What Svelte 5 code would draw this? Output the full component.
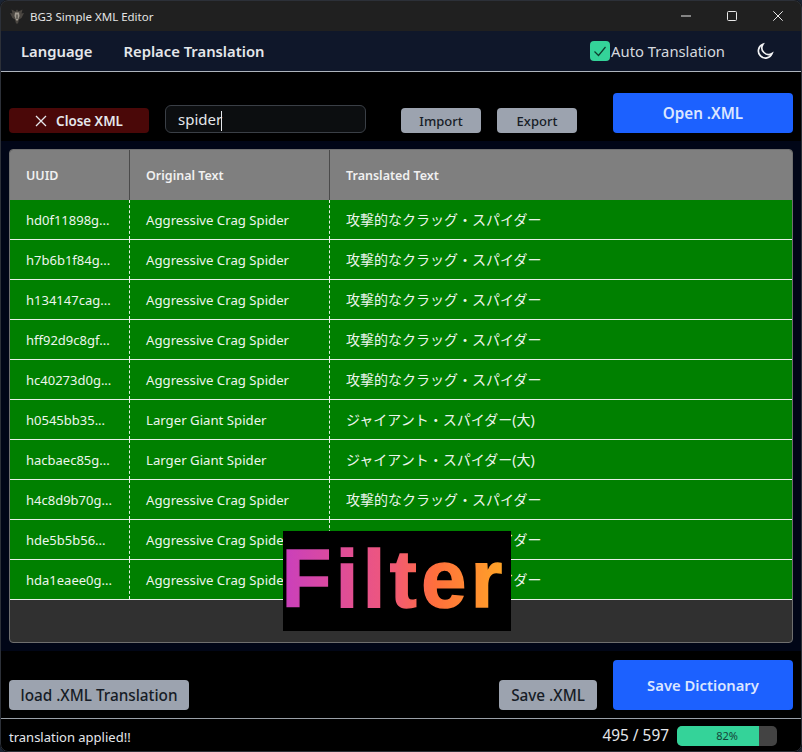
<script lang="ts">
  const crag = 'Aggressive Crag Spider';
  const cragJa = '攻撃的なクラッグ・スパイダー';
  const giant = 'Larger Giant Spider';
  const giantJa = 'ジャイアント・スパイダー(大)';

  const rows = [
    { uuid: 'hd0f11898g...', original: crag, translated: cragJa },
    { uuid: 'h7b6b1f84g...', original: crag, translated: cragJa },
    { uuid: 'h134147cag...', original: crag, translated: cragJa },
    { uuid: 'hff92d9c8gf...', original: crag, translated: cragJa },
    { uuid: 'hc40273d0g...', original: crag, translated: cragJa },
    { uuid: 'h0545bb35...', original: giant, translated: giantJa },
    { uuid: 'hacbaec85g...', original: giant, translated: giantJa },
    { uuid: 'h4c8d9b70g...', original: crag, translated: cragJa },
    { uuid: 'hde5b5b56...', original: crag, translated: cragJa },
    { uuid: 'hda1eaee0g...', original: crag, translated: cragJa }
  ];

  let search = $state('spider');
  let autoTranslate = $state(true);
  const done = 495;
  const total = 597;
  const percent = 82;
</script>

<div class="window">
  <!-- Title bar -->
  <header class="titlebar">
    <svg class="app-icon" viewBox="0 0 16 16" aria-hidden="true">
      <path d="M8 1.500 9.500 3.500 13.500 1.500 12.500 5.500 15 5 12.500 10 10 11.500 9 15.500H7L6 11.500 3.500 10 1 5 3.500 5.500 2.500 1.500 6.500 3.500Z" fill="#4a4641" />
      <path d="M6 4.500h4L10.500 8 8.800 12.500H7.200L5.500 8Z" fill="#a09a90" />
      <path d="M7.500 6.500h1V11h-1Z" fill="#34322e" />
    </svg>
    <span class="app-title">BG3 Simple XML Editor</span>
    <div class="window-controls">
      <svg viewBox="0 0 10 10" aria-hidden="true"><path d="M0 5h10" /></svg>
      <svg viewBox="0 0 10 10" aria-hidden="true"><rect x="0.5" y="0.5" width="9" height="9" rx="1" /></svg>
      <svg viewBox="0 0 10 10" aria-hidden="true"><path d="M0.300 0.300 9.700 9.700M9.700 0.300 0.300 9.700" /></svg>
    </div>
  </header>

  <!-- Menu bar -->
  <nav class="menubar">
    <span class="menu-item">Language</span>
    <span class="menu-item">Replace Translation</span>
    <label class="auto-translate">
      <input type="checkbox" bind:checked={autoTranslate} />
      <span class="checkmark">
        <svg viewBox="0 0 20 20" aria-hidden="true"><path d="M4.500 10.500 8.500 14.500 15.500 6" /></svg>
      </span>
      Auto Translation
    </label>
    <svg class="moon" viewBox="0 0 24 24" aria-hidden="true">
      <path d="M9.500 4A8.500 8.500 0 1 0 20.500 15 8 8 0 0 1 9.500 4Z" />
    </svg>
  </nav>

  <main class="content">
    <!-- Toolbar -->
    <div class="toolbar">
      <button class="btn btn-close">
        <svg viewBox="0 0 12 12" aria-hidden="true"><path d="M1 1 11 11M11 1 1 11" /></svg>
        Close XML
      </button>
      <input class="search" type="text" bind:value={search} />
      <span class="caret"></span>
      <button class="btn btn-muted btn-small first-small">Import</button>
      <button class="btn btn-muted btn-small">Export</button>
      <button class="btn btn-primary btn-open">Open .XML</button>
    </div>

    <!-- Translation table -->
    <div class="table-area">
      <section class="table-wrap">
        <div class="row head">
          <div class="cell">UUID</div>
          <div class="cell">Original Text</div>
          <div class="cell">Translated Text</div>
        </div>
        {#each rows as row}
          <div class="row body">
            <div class="cell">{row.uuid}</div>
            <div class="cell original">{row.original}</div>
            <div class="cell translated">{row.translated}</div>
          </div>
        {/each}
      </section>
    </div>

    <!-- Bottom actions -->
    <div class="actions">
      <button class="btn btn-muted btn-load">load .XML Translation</button>
      <button class="btn btn-muted btn-save">Save .XML</button>
      <button class="btn btn-primary btn-dict">Save Dictionary</button>
    </div>
  </main>

  <!-- Status bar -->
  <footer class="statusbar">
    <span class="status">translation applied!!</span>
    <span class="count">{done} / {total}</span>
    <div class="progress">
      <div class="progress-fill" style="width: {percent}%"></div>
      <span class="progress-label">{percent}%</span>
    </div>
  </footer>

  <!-- Video caption over the table -->
  <div class="caption"><span>Filter</span></div>
</div>

<style>
  :global(body) {
    margin: 0;
    background: #1b2433;
  }

  .window {
    position: relative;
    width: 802px;
    height: 752px;
    display: flex;
    flex-direction: column;
    overflow: hidden;
    box-sizing: border-box;
    border-radius: 8px;
    background: #000;
    color: #e5e7eb;
    font-family: 'Noto Sans', 'Noto Sans CJK JP', sans-serif;
  }

  /* Thin window frame, drawn above the content */
  .window::after {
    content: '';
    position: absolute;
    inset: 0;
    border: 1px solid #2c3038;
    border-radius: 8px;
    pointer-events: none;
  }

  /* Title bar */
  .titlebar {
    height: 31px;
    flex: none;
    display: flex;
    align-items: center;
    padding-left: 9px;
    background: #202020;
  }

  .app-icon {
    width: 16px;
    height: 16px;
  }

  .app-title {
    margin-left: 5px;
    padding-top: 1px;
    font-size: 11.500px;
    color: #e4e4e4;
  }

  .window-controls {
    margin-left: auto;
    display: flex;
    align-items: center;
    gap: 36px;
    padding-right: 19px;
  }

  .window-controls svg {
    width: 10px;
    height: 10px;
    fill: none;
    stroke: #e8e8e8;
    stroke-width: 1;
  }

  /* Menu bar */
  .menubar {
    height: 41px;
    flex: none;
    box-sizing: border-box;
    display: flex;
    align-items: center;
    padding: 0 27px 0 21px;
    background: #0f172a;
    border-bottom: 1px solid #aeb4bd;
  }

  .menu-item {
    margin-right: 31px;
    font-size: 14.800px;
    font-weight: 600;
    color: #e5e7eb;
  }

  .auto-translate {
    margin-left: auto;
    display: flex;
    align-items: center;
    font-size: 14.800px;
    color: #d5d9df;
  }

  .auto-translate input {
    display: none;
  }

  .checkmark {
    width: 20px;
    height: 20px;
    margin-right: 1px;
    border-radius: 4px;
    background: #34d399;
  }

  .checkmark svg {
    display: block;
    fill: none;
    stroke: #0f3d2e;
    stroke-width: 1.200;
  }

  .moon {
    width: 20px;
    height: 20px;
    margin-left: 30px;
    fill: none;
    stroke: #f3f4f6;
    stroke-width: 2;
  }

  /* Content */
  .content {
    flex: 1;
    min-height: 0;
    display: flex;
    flex-direction: column;
    padding: 21px 0 8px;
  }

  .toolbar {
    position: relative;
    display: flex;
    align-items: flex-end;
    height: 40px;
    flex: none;
    padding: 0 9px;
  }

  .btn {
    border: none;
    border-radius: 4px;
    font-family: inherit;
    font-weight: 600;
    padding: 0;
  }

  .btn-close {
    width: 140px;
    height: 25px;
    display: flex;
    align-items: center;
    justify-content: center;
    gap: 9px;
    background: #4a0808;
    color: #e5e7eb;
    font-size: 13.400px;
  }

  .btn-close svg {
    width: 12px;
    height: 12px;
    fill: none;
    stroke: #e5e7eb;
    stroke-width: 1.300;
  }

  .search {
    box-sizing: border-box;
    width: 201px;
    height: 28px;
    margin-left: 16px;
    padding: 0 12px;
    border: 1px solid #3a3f46;
    border-radius: 6px;
    outline: none;
    background: #0c0e10;
    color: #e5e7eb;
    font-family: inherit;
    font-size: 15px;
  }

  .caret {
    position: absolute;
    left: 221px;
    top: 18px;
    width: 1px;
    height: 20px;
    background: #e5e7eb;
  }

  .btn-muted {
    background: #9ca3af;
    color: #161c26;
    font-weight: 500;
  }

  .btn-small {
    width: 80px;
    height: 25px;
    margin-left: 16px;
    font-size: 13px;
  }

  .first-small {
    margin-left: 35px;
  }

  .btn-primary {
    width: 180px;
    background: #1c61ff;
    color: #dbe6ff;
  }

  .btn-open {
    height: 40px;
    margin-left: auto;
    font-size: 15.200px;
  }

  /* Table */
  .table-area {
    flex: none;
    margin-top: 8px;
    padding: 8px 9px;
    background: #010617;
  }

  .table-wrap {
    box-sizing: border-box;
    height: 494px;
    border: 1px solid #6f6f6f;
    border-radius: 4px;
    overflow: hidden;
    background: #303030;
  }

  .row {
    display: grid;
    grid-template-columns: 119px 200px 1fr;
  }

  .head {
    height: 50px;
    background: #7f7f7f;
    color: #f0f0f0;
    font-size: 12.500px;
    font-weight: 600;
  }

  .head .cell + .cell {
    border-left: 1px solid #4a4a4a;
  }

  .body {
    height: 40px;
    box-sizing: border-box;
    border-bottom: 1px solid #e8efe8;
    background: #008000;
    color: #edf5ed;
    font-size: 13px;
  }

  .body .cell + .cell {
    border-left: 1px dashed #e8efe8;
  }

  .original {
    font-size: 13.200px;
  }

  .translated {
    padding-bottom: 2px;
    font-size: 14px;
  }

  .cell {
    display: flex;
    align-items: center;
    padding-left: 16px;
    white-space: nowrap;
    overflow: hidden;
  }

  /* Bottom actions */
  .actions {
    flex: 1;
    display: flex;
    align-items: flex-end;
    padding: 0 9px;
  }

  .btn-load {
    width: 180px;
    height: 30px;
    font-size: 15.300px;
  }

  .btn-save {
    width: 98px;
    height: 30px;
    margin-left: auto;
    margin-right: 16px;
    font-size: 15.300px;
  }

  .btn-dict {
    height: 50px;
    font-size: 14.800px;
  }

  /* Status bar */
  .statusbar {
    height: 34px;
    flex: none;
    box-sizing: border-box;
    display: flex;
    align-items: center;
    padding: 0 25px 0 9px;
    border-top: 1px solid #9aa0a8;
    font-size: 13px;
  }

  .status {
    padding-top: 2px;
  }

  .count {
    margin-left: auto;
    margin-right: 8px;
    font-size: 15.400px;
  }

  .progress {
    position: relative;
    width: 100px;
    height: 20px;
    border-radius: 5px;
    overflow: hidden;
    background: #434343;
  }

  .progress-fill {
    height: 100%;
    background: #34d399;
  }

  .progress-label {
    position: absolute;
    inset: 0;
    display: flex;
    align-items: center;
    justify-content: center;
    font-size: 11px;
    color: #14463a;
  }

  /* Caption */
  .caption {
    position: absolute;
    left: 283px;
    top: 531px;
    width: 228px;
    height: 100px;
    box-sizing: border-box;
    padding: 0 10px 3px 0;
    display: flex;
    align-items: center;
    justify-content: center;
    background: #000;
  }

  .caption span {
    font-family: 'Liberation Sans', sans-serif;
    font-size: 81px;
    font-weight: 700;
    letter-spacing: 4.500px;
    margin-right: -4.500px;
    line-height: 1;
    background: linear-gradient(90deg, #c93fbd 0%, #f0587a 48%, #ff6f3c 68%, #ffa726 100%);
    -webkit-background-clip: text;
    background-clip: text;
    color: transparent;
    -webkit-text-stroke: 1.500px transparent;
  }
</style>
